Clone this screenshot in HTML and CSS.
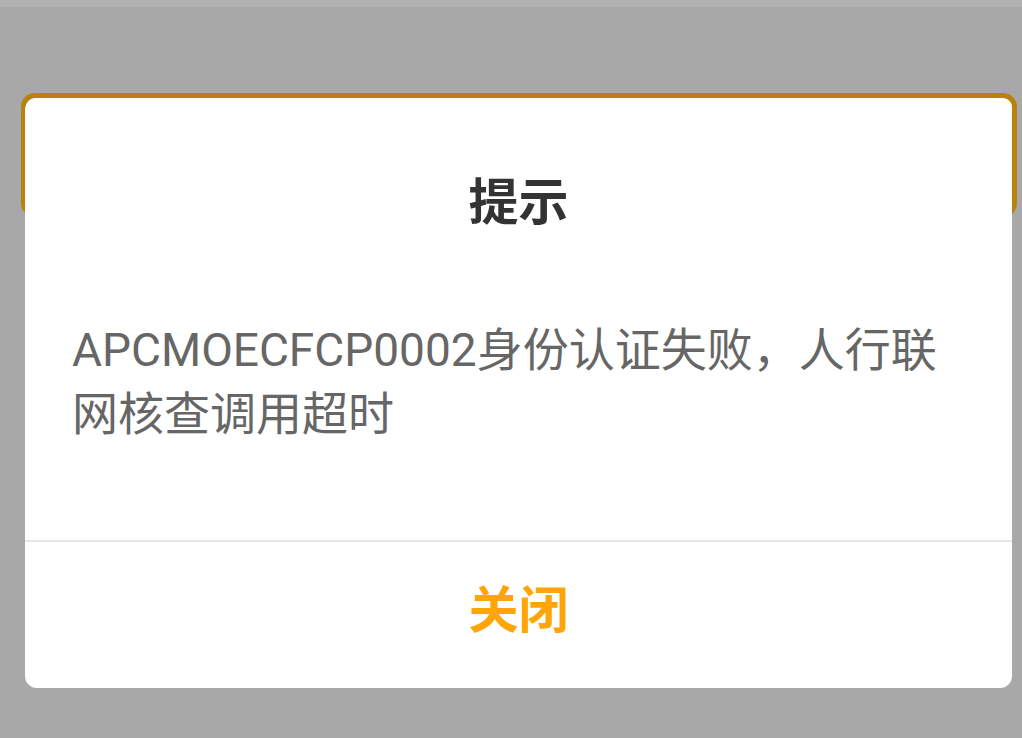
FILE: index.html
```html
<!DOCTYPE html>
<html lang="zh">
<head>
<meta charset="utf-8">
<link rel="stylesheet" href="styles.css">
</head>
<body>
<div class="topbar"></div>
<div class="page">
  <div class="card"></div>
</div>
<div class="dialog">
  <div class="title">提示</div>
  <div class="message">APCMOECFCP0002身份认证失败，人行联网核查调用超时</div>
  <div class="actions">
    <div class="btn">关闭</div>
  </div>
</div>
</body>
</html>
```
FILE: styles.css
```css
html, body {
  margin: 0;
  padding: 0;
  width: 1022px;
  height: 738px;
  overflow: hidden;
  background: #a8a8a8;
  font-family: Roboto, "Noto Sans CJK SC", sans-serif;
}
.topbar {
  height: 7px;
  background: #b1b1b1;
}
.page {
  position: relative;
}
.card {
  position: absolute;
  left: 21px;
  top: 86px;
  width: 986px;
  height: 114px;
  border: 5px solid #b8820f;
  border-radius: 14px;
  background: #fff;
}
.dialog {
  position: absolute;
  left: 25px;
  top: 98px;
  width: 987px;
  height: 590px;
  background: #fff;
  border-radius: 12px;
  display: flex;
  flex-direction: column;
}
.title {
  padding-top: 68px;
  line-height: 64px;
  font-size: 50px;
  font-weight: 700;
  color: #333;
  text-align: center;
  font-family: "Noto Sans CJK SC", sans-serif;
}
.message {
  margin-top: 88px;
  padding: 0 47px 94px 47px;
  font-size: 46px;
  line-height: 64px;
  color: #666;
}
.actions {
  border-top: 2px solid #e6e6e6;
  flex: 1;
  display: flex;
  align-items: center;
  justify-content: center;
}
.btn {
  font-size: 50px;
  font-weight: 700;
  color: #ffa50a;
  font-family: "Noto Sans CJK SC", sans-serif;
  margin-top: -18px;
}
```
